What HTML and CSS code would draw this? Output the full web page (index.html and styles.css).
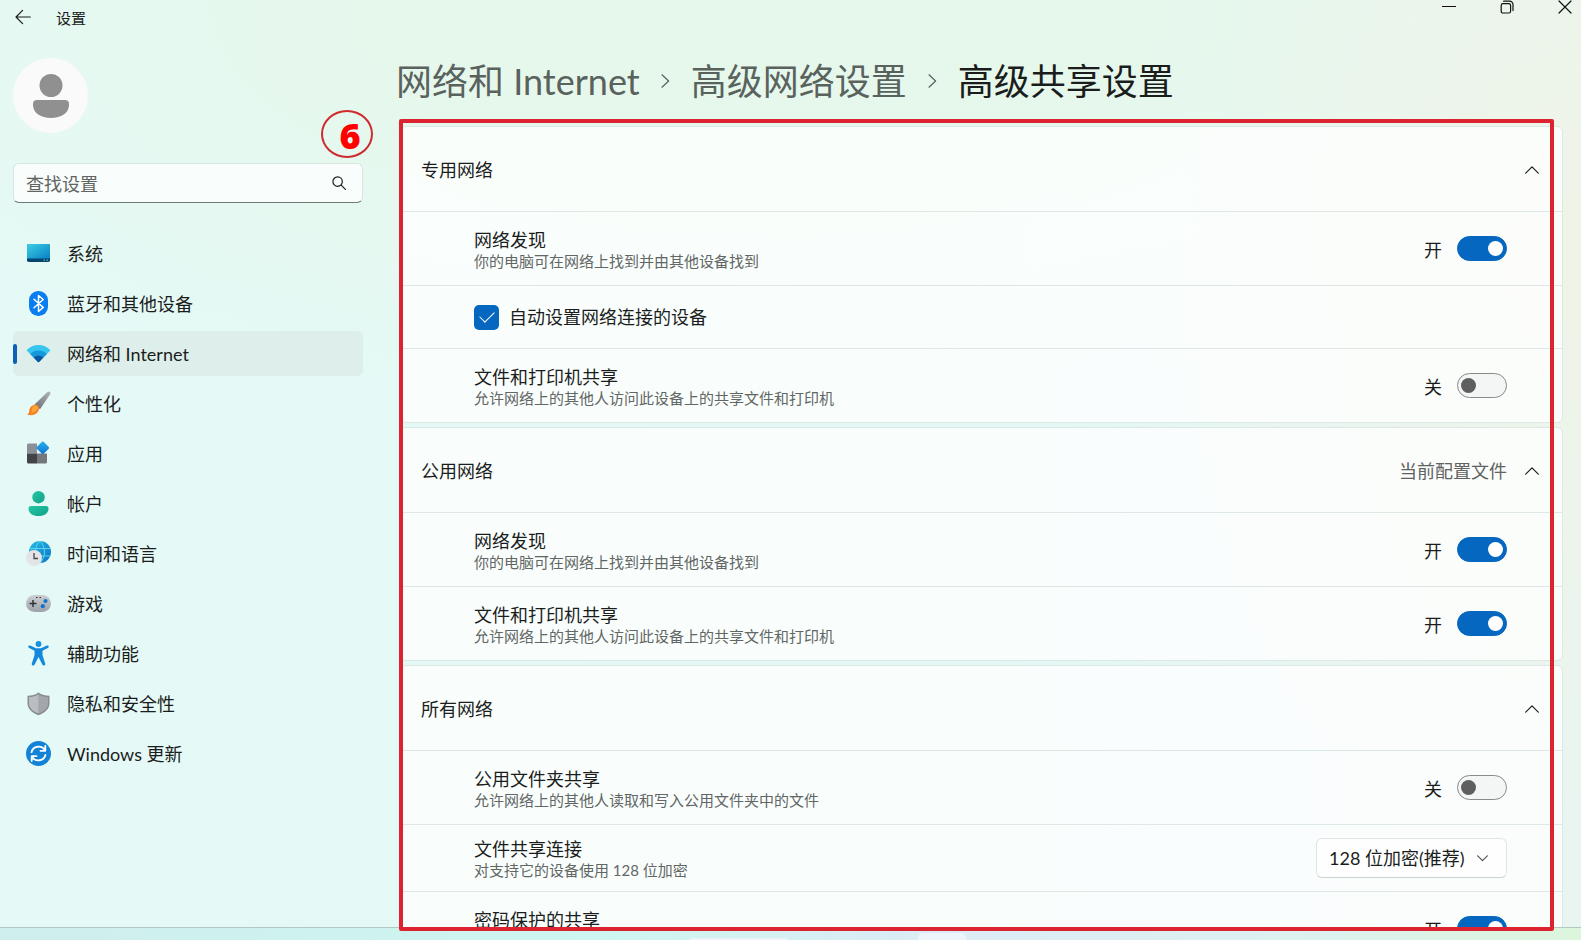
FILE: index.html
```html
<!DOCTYPE html>
<html lang="zh-CN">
<head>
<meta charset="utf-8">
<title>设置</title>
<link rel="stylesheet" href="styles.css">
</head>
<body>
<div class="window">
  <header class="titlebar">
    <button class="back" aria-label="返回"><svg width="16" height="16" viewBox="0 0 16 16"><path d="M15.3 8H1M7.6 1.4 1 8l6.6 6.6" class="line"/></svg></button>
    <span class="app-title">设置</span>
    <div class="controls">
      <button aria-label="最小化"><svg width="14" height="14" viewBox="0 0 14 14"><path d="M.5 6.5h13" class="line"/></svg></button>
      <button aria-label="还原"><svg width="14" height="14" viewBox="0 0 14 14"><rect x="1.2" y="3.6" width="9.4" height="9.4" rx="1.8" class="line"/><path d="M3.6 1.2h6a3.4 3.4 0 0 1 3.4 3.4v6" class="line"/></svg></button>
      <button aria-label="关闭"><svg width="14" height="14" viewBox="0 0 14 14"><path d="M1 1l12 12M13 1 1 13" class="line"/></svg></button>
    </div>
  </header>

  <aside class="sidebar">
    <div class="avatar"><svg width="36" height="44" viewBox="0 0 36 44"><circle cx="18" cy="11.5" r="11.5"/><path d="M4 26h28q4 0 4 4v1c0 8-8 13-18 13S0 39 0 31v-1q0-4 4-4z"/></svg></div>
    <div class="search">
      <input type="text" placeholder="查找设置" aria-label="查找设置">
      <svg width="14" height="14" viewBox="0 0 14 14"><circle cx="5.6" cy="5.6" r="4.7" class="line"/><path d="M9.2 9.2l4.2 4.2" class="line"/></svg>
    </div>
    <nav class="nav">
      <a href="#"><svg width="25" height="25" viewBox="0 0 25 25"><defs><linearGradient id="g1" x1="0" y1="0" x2="1" y2="1"><stop offset="0" stop-color="#3bd0e4"/><stop offset="1" stop-color="#0a7fc4"/></linearGradient></defs><rect x="1" y="3" width="23" height="18" rx="1.8" fill="#05456e"/><path d="M1 17.500V4.800Q1 3 2.800 3h19.400Q24 3 24 4.800v12.700z" fill="url(#g1)"/><path d="M17.500 19.200h1.500M20.500 19.200h1.500" stroke="#7cc" stroke-width="1"/></svg>系统</a>
      <a href="#"><svg width="25" height="25" viewBox="0 0 25 25"><rect x="3" y="0" width="19" height="25" rx="9.200" fill="#0a7df0"/><path d="M8 8.200l9.200 8.200-4.700 4.100v-16l4.700 4L8 16.700" fill="none" stroke="#fff" stroke-width="1.500" stroke-linejoin="round" stroke-linecap="round"/></svg>蓝牙和其他设备</a>
      <a href="#" class="active" aria-current="page"><svg width="25" height="25" viewBox="0 0 25 25"><path d="M.5 9.200C7 2.300 18 2.300 24.500 9.200L12.500 21.500z" fill="#36c5ef"/><path d="M4.200 12.900c4.600-4.600 12-4.600 16.600 0l-8.300 8.600z" fill="#1597dc"/><path d="M7.700 16.500c2.700-2.500 6.900-2.500 9.600 0l-4 4.200q-.8.800-1.600 0z" fill="#0c559f"/></svg>网络和 Internet</a>
      <a href="#"><svg width="25" height="25" viewBox="0 0 25 25"><defs><linearGradient id="g2" x1="0" y1="1" x2="1" y2="0"><stop offset="0" stop-color="#696d72"/><stop offset="1" stop-color="#b2b5b8"/></linearGradient></defs><path d="M8.500 13.500 21.500 1q1.500-1.100 2.500 0t0 2.500L14 18.200z" fill="url(#g2)"/><path d="M7 14.200c3-2 7.400 1 5.700 5C11 23.800 5.500 25 .8 23.600c3-1.300 2-3.200 2.800-5.700.6-1.800 1.700-2.900 3.400-3.700z" fill="#f5811f"/><path d="M7.500 14.800c2-1 4.500.5 4.700 2.400-2 2.800-4.500 4.800-7.500 5.300 2-2 .7-5.900 2.800-7.700z" fill="#fca43a"/></svg>个性化</a>
      <a href="#"><svg width="25" height="25" viewBox="0 0 25 25"><defs><linearGradient id="g3" x1="0" y1="0" x2="1" y2="1"><stop offset="0" stop-color="#26b5ed"/><stop offset="1" stop-color="#1171cf"/></linearGradient></defs><path d="M1 4q0-1.500 1.500-1.500H11v10H1z" fill="#8b9098"/><path d="M1 12.500h10v10H2.500Q1 22.500 1 21z" fill="#414347"/><path d="M11 12.500h10V21q0 1.500-1.500 1.500H11z" fill="#74777c"/><rect x="12" y="2" width="9.600" height="9.600" rx="1.200" transform="rotate(45 16.800 6.800)" fill="url(#g3)"/></svg>应用</a>
      <a href="#"><svg width="25" height="25" viewBox="0 0 25 25"><defs><linearGradient id="g4" x1="0" y1="0" x2="1" y2="1"><stop offset="0" stop-color="#23c7a6"/><stop offset="1" stop-color="#12a086"/></linearGradient></defs><circle cx="12.500" cy="6.200" r="6.200" fill="url(#g4)"/><path d="M5 15h15q2.500 0 2.500 2.500C22.500 22.500 18 25 12.500 25s-10-2.500-10-7.500Q2.500 15 5 15z" fill="url(#g4)"/></svg>帐户</a>
      <a href="#"><svg width="25" height="25" viewBox="0 0 25 25"><defs><linearGradient id="g5" x1="0" y1="0" x2="1" y2="1"><stop offset="0" stop-color="#27bde4"/><stop offset="1" stop-color="#0a72c4"/></linearGradient></defs><circle cx="14" cy="11" r="11" fill="url(#g5)"/><path d="M3.500 7.500h21M4 15h20.500M14 0c-6 5-6 17 0 22M14 0c6 5 6 17 0 22" fill="none" stroke="#5fd3ee" stroke-width="1"/><circle cx="8" cy="17" r="8" fill="#e2e4e7"/><path d="M8 12v5.500h4" fill="none" stroke="#45484d" stroke-width="1.300"/></svg>时间和语言</a>
      <a href="#"><svg width="25" height="25" viewBox="0 0 25 25"><defs><linearGradient id="g6" x1="0" y1="0" x2="0" y2="1"><stop offset="0" stop-color="#ccd0d4"/><stop offset="1" stop-color="#9da2aa"/></linearGradient></defs><rect x="0" y="4" width="25" height="17" rx="8.500" fill="url(#g6)"/><path d="M3.500 12.500h7M7 9v7" stroke="#303338" stroke-width="1.500"/><path d="M10 6.500h1.500M13.500 6.500H15" stroke="#303338" stroke-width="1.200"/><circle cx="19.500" cy="10" r="2.100" fill="#1673c9"/><circle cx="16.800" cy="15.200" r="2.100" fill="#1673c9"/></svg>游戏</a>
      <a href="#"><svg width="25" height="25" viewBox="0 0 25 25"><circle cx="12.500" cy="3" r="2.900" fill="#1492e0"/><path d="M4.200 4.600 10 7.200h5l5.800-2.600c2-.6 2.700 1.700 1 2.500L16.500 9.800v4.400l2.700 8.200c.5 2-2 3-2.900 1.200L12.500 16l-3.800 7.600c-1 1.800-3.400.8-2.900-1.200l2.700-8.200V9.800L3.200 7.100c-1.700-.8-1-3.100 1-2.500z" fill="#1389dc"/></svg>辅助功能</a>
      <a href="#"><svg width="25" height="25" viewBox="0 0 25 25"><path d="M12.500 1.500c3 2.300 6.700 3 11 3.200v7.500c0 5.500-4 9.300-11 12-7-2.700-11-6.500-11-12V4.700c4.300-.2 8-.9 11-3.200z" fill="#888c91"/><path d="M12.500 3.200c2.700 1.900 5.800 2.700 9.500 2.900v6.200c0 4.500-3.300 7.800-9.500 10.300z" fill="#a3a7ac"/><path d="M12.500 3.200C9.800 5.100 6.700 5.900 3 6.100v6.200c0 4.500 3.300 7.800 9.500 10.300z" fill="#babdc2"/></svg>隐私和安全性</a>
      <a href="#"><svg width="25" height="25" viewBox="0 0 25 25"><circle cx="12.500" cy="12.500" r="12.500" fill="#1283d6"/><path d="M5.500 11.200c1.300-6.200 10-7.600 13.500-2.200M19.300 5v4.800h-4.800M19.500 13.800c-1.300 6.200-10 7.600-13.500 2.200M5.700 20v-4.800h4.800" fill="none" stroke="#fff" stroke-width="1.800" stroke-linecap="round" stroke-linejoin="round"/></svg>Windows 更新</a>
    </nav>
  </aside>

  <main class="main">
    <h1 class="crumbs">
      <a href="#">网络和 Internet</a>
      <svg width="9" height="14" viewBox="0 0 9 14"><path d="M1 .8 7.600 7 1 13.200" class="line"/></svg>
      <a href="#">高级网络设置</a>
      <svg width="9" height="14" viewBox="0 0 9 14"><path d="M1 .8 7.600 7 1 13.200" class="line"/></svg>
      <span>高级共享设置</span>
    </h1>

    <section class="card">
      <div class="card-head"><h2>专用网络</h2><button class="chev" aria-label="折叠专用网络"><svg width="14" height="8" viewBox="0 0 14 8"><path d="M.7 7.200 7 .9l6.300 6.300" class="line"/></svg></button></div>
      <div class="row">
        <div class="text"><label for="t1">网络发现</label><p>你的电脑可在网络上找到并由其他设备找到</p></div>
        <div class="state"><span>开</span><input class="toggle" type="checkbox" role="switch" id="t1" checked></div>
      </div>
      <div class="row check-row">
        <input class="check" type="checkbox" id="auto" checked><label for="auto">自动设置网络连接的设备</label>
      </div>
      <div class="row">
        <div class="text"><label for="t2">文件和打印机共享</label><p>允许网络上的其他人访问此设备上的共享文件和打印机</p></div>
        <div class="state"><span>关</span><input class="toggle" type="checkbox" role="switch" id="t2"></div>
      </div>
    </section>

    <section class="card">
      <div class="card-head"><h2>公用网络</h2><span class="note">当前配置文件</span><button class="chev" aria-label="折叠公用网络"><svg width="14" height="8" viewBox="0 0 14 8"><path d="M.7 7.200 7 .9l6.300 6.300" class="line"/></svg></button></div>
      <div class="row">
        <div class="text"><label for="t3">网络发现</label><p>你的电脑可在网络上找到并由其他设备找到</p></div>
        <div class="state"><span>开</span><input class="toggle" type="checkbox" role="switch" id="t3" checked></div>
      </div>
      <div class="row">
        <div class="text"><label for="t4">文件和打印机共享</label><p>允许网络上的其他人访问此设备上的共享文件和打印机</p></div>
        <div class="state"><span>开</span><input class="toggle" type="checkbox" role="switch" id="t4" checked></div>
      </div>
    </section>

    <section class="card">
      <div class="card-head"><h2>所有网络</h2><button class="chev" aria-label="折叠所有网络"><svg width="14" height="8" viewBox="0 0 14 8"><path d="M.7 7.200 7 .9l6.300 6.300" class="line"/></svg></button></div>
      <div class="row">
        <div class="text"><label for="t5">公用文件夹共享</label><p>允许网络上的其他人读取和写入公用文件夹中的文件</p></div>
        <div class="state"><span>关</span><input class="toggle" type="checkbox" role="switch" id="t5"></div>
      </div>
      <div class="row select-row">
        <div class="text"><label for="enc">文件共享连接</label><p>对支持它的设备使用 128 位加密</p></div>
        <div class="picker"><select id="enc"><option>128 位加密(推荐)</option></select><svg width="11" height="7" viewBox="0 0 11 7"><path d="M.7.8 5.500 5.700 10.300.8" class="line"/></svg></div>
      </div>
      <div class="row">
        <div class="text"><label for="t6">密码保护的共享</label></div>
        <div class="state"><span>开</span><input class="toggle" type="checkbox" role="switch" id="t6" checked></div>
      </div>
    </section>
  </main>
</div>
<div class="taskbar"><span class="tab wide"></span><span class="tab"></span></div>

<div class="frame"></div>
<div class="step">6</div>
</body>
</html>
```
FILE: styles.css
```css
* { box-sizing: border-box; }

body {
  margin: 0;
  height: 100vh;
  display: flex;
  flex-direction: column;
  overflow: hidden;
  position: relative;
  font-family: Lato, "Noto Sans CJK SC", sans-serif;
  font-size: 18px;
  line-height: 22px;
  color: #1b1d1c;
}

a { color: inherit; text-decoration: none; }
h1, h2, p { margin: 0; font-weight: 400; }
button { padding: 0; border: 0; background: none; color: inherit; font: inherit; }
svg { display: block; flex: none; }
.line { fill: none; stroke: currentColor; stroke-width: 1.2; stroke-linecap: round; stroke-linejoin: round; }

.window {
  flex: 1;
  min-height: 0;
  display: grid;
  grid-template-columns: 363px minmax(0, 1fr);
  grid-template-rows: 36px minmax(0, 1fr);
  column-gap: 33px;
  border-bottom: 1px solid #b4c8c3;
  background:
    radial-gradient(ellipse 420px 640px at 100% 28%, #eff4e9 10%, transparent 100%),
    radial-gradient(ellipse 1000px 420px at 48% 0%, #e6f8ec 40%, transparent 100%),
    linear-gradient(90deg, #e5f9f6 0%, #e4f8f5 60%, #e8f5f1 100%);
}

.titlebar {
  grid-column: 1 / -1;
  display: flex;
  align-items: flex-start;
}
.back { padding: 9px 0 0 15px; }
.app-title { padding: 7px 0 0 25px; font-size: 15px; }
.controls { margin-left: auto; display: flex; gap: 44px; padding-right: 9px; color: #111; }

.sidebar { padding: 22px 0 0 13px; }
.avatar {
  width: 75px;
  height: 75px;
  border-radius: 50%;
  background: #fafafa;
  display: grid;
  place-items: center;
  fill: #909090;
}
.search {
  margin-top: 30px;
  height: 40px;
  display: flex;
  align-items: center;
  padding: 0 16px 0 12px;
  border: 1px solid #d9e5e1;
  border-bottom-color: #6d7b77;
  border-radius: 6px;
  background: #f9fdfc;
}
.search input {
  flex: 1;
  min-width: 0;
  padding: 2px 0 0;
  border: 0;
  background: none;
  outline: 0;
  font: inherit;
}
.search input::placeholder { color: #606462; opacity: 1; }

.nav { margin-top: 28px; display: flex; flex-direction: column; gap: 5px; }
.nav a {
  position: relative;
  height: 45px;
  display: flex;
  align-items: center;
  gap: 16px;
  padding-left: 13px;
  border-radius: 6px;
}
.nav .active { background: #deefeb; }
.nav .active::before {
  content: "";
  position: absolute;
  left: 0;
  top: 13px;
  width: 4px;
  height: 20px;
  border-radius: 2px;
  background: #0f5fb8;
}

.main {
  display: flex;
  flex-direction: column;
  gap: 4px;
  padding-right: 18px;
  overflow: hidden;
}
.crumbs {
  display: flex;
  align-items: center;
  gap: 21px;
  height: 86px;
  flex: none;
  padding-top: 3px;
  font-size: 36px;
  line-height: 44px;
  color: #1b1d1c;
}
.crumbs a, .crumbs svg { color: #5a625e; }

.card {
  flex: none;
  margin-left: 4px;
  border: 1px solid #dce8e4;
  border-radius: 6px;
  background: rgba(255, 255, 255, .78);
}
.card-head {
  height: 84px;
  display: flex;
  align-items: center;
  padding: 2px 23px 0 20px;
}
.card-head h2 { flex: 1; font-size: 18px; line-height: 22px; }
.note { color: #60625f; }
.chev { margin-left: 18px; }

.row {
  display: flex;
  justify-content: space-between;
  min-height: 74px;
  padding: 17px 55px 14px 73px;
  border-top: 1px solid #dee8e5;
}
.text p { font-size: 15px; line-height: 20px; color: #626664; }
.text label { display: block; }
.state { display: flex; align-items: center; gap: 15px; height: 38px; }
.state span { padding-top: 3px; }

.toggle {
  appearance: none;
  margin: 0;
  width: 50px;
  height: 25px;
  padding: 0 3px;
  display: flex;
  align-items: center;
  border: 1px solid #888b8a;
  border-radius: 13px;
  background: #f4f6f5;
}
.toggle::before { content: ""; width: 15px; height: 15px; border-radius: 50%; background: #5f5f5f; }
.toggle:checked { justify-content: flex-end; border-color: #0567c0; background: #0567c0; }
.toggle:checked::before { background: #fff; }

.check-row { min-height: 63px; justify-content: flex-start; align-items: center; gap: 10px; padding-top: 0; padding-bottom: 0; }
.check {
  appearance: none;
  margin: 0;
  width: 25px;
  height: 25px;
  display: grid;
  place-items: center;
  border-radius: 5px;
  background: #0567c0;
}
.check:checked::before {
  content: "";
  width: 13px;
  height: 7px;
  margin-bottom: 4px;
  border: solid #fff;
  border-width: 0 0 1px 1px;
  transform: rotate(-45deg);
}

.select-row { min-height: 67px; padding-top: 13px; padding-bottom: 11px; }
.picker { display: grid; align-items: center; height: 40px; }
.picker select, .picker svg { grid-area: 1 / 1; }
.picker svg { justify-self: end; margin-right: 19px; color: #555; pointer-events: none; }
.picker select {
  appearance: none;
  width: 191px;
  height: 40px;
  padding: 0 0 0 12px;
  border: 1px solid #dfe5e3;
  border-bottom-color: #cdd3d1;
  border-radius: 6px;
  background: #fefefe;
  color: inherit;
  font: inherit;
}

.taskbar {
  flex: none;
  height: 12px;
  display: flex;
  align-items: flex-end;
  gap: 130px;
  padding-left: 690px;
  background: linear-gradient(90deg, #cfeeee 0%, #cdf6f0 38%, #dcebf5 60%, #dcf1f0 82%, #dcf5dc 100%);
}
.tab { width: 48px; height: 7px; border-radius: 5px 5px 0 0; background: #edf5fa; }
.wide { width: 98px; height: 2px; }

.frame {
  position: absolute;
  inset: 119px 27px 9px 399px;
  border: 4px solid #dc2430;
  border-radius: 2px;
}
.step {
  position: absolute;
  left: 321px;
  top: 110px;
  width: 52px;
  height: 48px;
  padding-left: 6px;
  border: 2px solid #cf2a2e;
  border-radius: 50%;
  font: 900 36px/48px "Noto Sans", sans-serif;
  text-align: center;
  color: #f00;
}
```
